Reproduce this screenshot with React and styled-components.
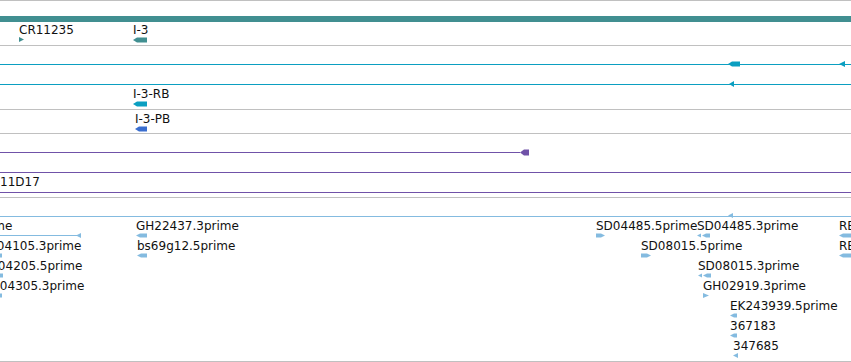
import React from "react";
import styled, { createGlobalStyle } from "styled-components";

const Global = createGlobalStyle`
  html, body { margin: 0; padding: 0; background: #fff; overflow: hidden; }
  body { font-family: "DejaVu Sans", "Liberation Sans", sans-serif; }
`;

const C = {
  grid: "#c0c0c0",
  teal: "#418f91",
  cyan: "#0b9fc1",
  blue: "#3a6ecf",
  purple: "#7052a8",
  sky: "#84bbe0",
};

const Browser = styled.div`
  width: 851px;
  display: flex;
  flex-direction: column;
  border-top: 1px solid ${C.grid};
`;

const Track = styled.div`
  position: relative;
  height: ${(p) => p.$h}px;
  border-bottom: 1px solid ${C.grid};
  overflow: hidden;
  box-sizing: content-box;
`;

const LaneTrack = styled(Track)`
  display: flex;
  flex-direction: column;
  padding-top: ${(p) => p.$pad}px;
  height: ${(p) => p.$h - p.$pad}px;
`;

const Lane = styled.div`
  position: relative;
  flex: 0 0 20px;
  height: 20px;
`;

const Backbone = styled.div`
  position: absolute;
  left: 0;
  top: ${(p) => p.$y}px;
  width: ${(p) => (p.$w ? `${p.$w}px` : "100%")};
  height: ${(p) => p.$t || 1}px;
  background: ${(p) => p.$c};
`;

const Feature = styled.div`
  position: absolute;
  left: ${(p) => p.$x}px;
  top: ${(p) => p.$y || 0}px;
  display: flex;
  flex-direction: column;
  align-items: flex-start;
`;

const Label = styled.span`
  font-size: 12px;
  line-height: 14px;
  height: 14px;
  color: #111;
  white-space: nowrap;
`;

const Mark = styled.svg`
  position: absolute;
  left: ${(p) => p.$x}px;
  top: ${(p) => p.$y}px;
  display: block;
`;

const GlyphSvg = styled.svg`
  display: block;
`;

function shape(type, w, h) {
  const m = h / 2;
  switch (type) {
    case "tri-r":
      return <polygon points={`0,0 ${w},${m} 0,${h}`} />;
    case "tri-l":
      return <polygon points={`${w},0 0,${m} ${w},${h}`} />;
    case "arrow-r":
      return (
        <polygon
          points={`0,0.5 ${w - 4},0.5 ${w},${m} ${w - 4},${h - 0.5} 0,${h - 0.5}`}
        />
      );
    case "double-l":
      return (
        <>
          <polygon points={`0,${m} 4,0.5 4,${h - 0.5}`} />
          <polygon points={`5,${m} 9,0.5 ${w},0.5 ${w},${h - 0.5} 9,${h - 0.5}`} />
        </>
      );
    case "line-l":
      return (
        <>
          <rect x="0" y={m - 0.5} width={w} height="1" />
          <polygon points={`${w},0 ${w - 5},${m} ${w},${h}`} />
        </>
      );
    case "arrow-l":
    default:
      return (
        <polygon
          points={`0,${m} 4,0.5 ${w},0.5 ${w},${h - 0.5} 4,${h - 0.5}`}
        />
      );
  }
}

function Glyph({ type = "arrow-l", w, h = 5, color }) {
  return (
    <GlyphSvg width={w} height={h} viewBox={`0 0 ${w} ${h}`} fill={color}>
      {shape(type, w, h)}
    </GlyphSvg>
  );
}

function Feat({ x, y, label, glyph, w, h, color }) {
  return (
    <Feature $x={x} $y={y}>
      <Label>{label}</Label>
      <Glyph type={glyph} w={w} h={h} color={color} />
    </Feature>
  );
}

function OnLine({ x, y, type, w, h, color }) {
  return (
    <Mark $x={x} $y={y} width={w} height={h} viewBox={`0 0 ${w} ${h}`} fill={color}>
      {shape(type, w, h)}
    </Mark>
  );
}

const estLanes = [
  [
    { x: -89, label: "SD04085.5prime", glyph: "line-l", w: 170 },
    { x: 136, label: "GH22437.3prime", glyph: "arrow-l", w: 11 },
    { x: 596, label: "SD04485.5prime", glyph: "arrow-r", w: 9 },
    { x: 697, label: "SD04485.3prime", glyph: "double-l", w: 13 },
    { x: 839, label: "RE15305.3prime", glyph: "arrow-l", w: 12 },
  ],
  [
    { x: -20, label: "SD04105.3prime", glyph: "arrow-l", w: 22 },
    { x: 137, label: "bs69g12.5prime", glyph: "arrow-l", w: 10 },
    { x: 641, label: "SD08015.5prime", glyph: "arrow-r", w: 10 },
    { x: 839, label: "RE04105.5prime", glyph: "arrow-l", w: 12 },
  ],
  [
    { x: -19, label: "SD04205.5prime", glyph: "arrow-l", w: 22 },
    { x: 698, label: "SD08015.3prime", glyph: "double-l", w: 13 },
  ],
  [
    { x: -17, label: "SD04305.3prime", glyph: "arrow-l", w: 19 },
    { x: 703, label: "GH02919.3prime", glyph: "tri-r", w: 6 },
  ],
  [{ x: 730, label: "EK243939.5prime", glyph: "arrow-l", w: 7 }],
  [{ x: 730, label: "367183", glyph: "arrow-l", w: 7 }],
  [{ x: 733, label: "347685", glyph: "tri-l", w: 5 }],
];

export default function App() {
  return (
    <>
      <Global />
      <Browser>
        <Track $h={44}>
          <Backbone $y={15} $t={6} $c={C.teal} />
          <Feat x={19} y={22} label="CR11235" glyph="tri-r" w={5} color={C.teal} />
          <Feat x={133} y={22} label="I-3" glyph="arrow-l" w={14} h={6} color={C.teal} />
        </Track>

        <Track $h={63}>
          <Backbone $y={18} $c={C.cyan} />
          <Backbone $y={38} $c={C.cyan} />
          <OnLine x={728} y={15} type="arrow-l" w={12} h={6} color={C.cyan} />
          <OnLine x={839} y={15} type="tri-l" w={6} h={6} color={C.cyan} />
          <OnLine x={729} y={35} type="tri-l" w={5} h={6} color={C.cyan} />
          <Feat x={133} y={41} label="I-3-RB" glyph="arrow-l" w={14} h={6} color={C.cyan} />
        </Track>

        <Track $h={23}>
          <Feat x={135} y={2} label="I-3-PB" glyph="arrow-l" w={12} h={6} color={C.blue} />
        </Track>

        <Track $h={63}>
          <Backbone $y={18} $w={520} $c={C.purple} />
          <OnLine x={520} y={15} type="arrow-l" w={9} h={7} color={C.purple} />
          <Backbone $y={38} $c={C.purple} />
          <Backbone $y={58} $c={C.purple} />
          <Feature $x={0} $y={41}>
            <Label>11D17</Label>
          </Feature>
        </Track>

        <LaneTrack $h={163} $pad={21}>
          <Backbone $y={18} $c={C.sky} />
          <OnLine x={728} y={15} type="tri-l" w={5} h={5} color={C.sky} />
          {estLanes.map((lane, i) => (
            <Lane key={i}>
              {lane.map((f) => (
                <Feat
                  key={f.label}
                  x={f.x}
                  label={f.label}
                  glyph={f.glyph}
                  w={f.w}
                  h={5}
                  color={C.sky}
                />
              ))}
            </Lane>
          ))}
        </LaneTrack>
      </Browser>
    </>
  );
}
